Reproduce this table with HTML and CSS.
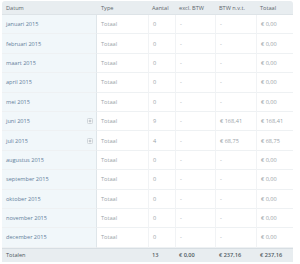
FILE: index.html
```html
<!DOCTYPE html>
<html>
<head>
<meta charset="utf-8">
<link rel="stylesheet" href="styles.css">
</head>
<body>
<div class="wrap">
<table class="tbl">
<thead>
<tr><th class="c-date">Datum</th><th class="c-type">Type</th><th class="c-n">Aantal</th><th class="c-ex">excl. BTW</th><th class="c-btw">BTW n.v.t.</th><th class="c-tot">Totaal</th></tr>
</thead>
<tbody>
<tr><td class="date">januari 2015</td><td>Totaal</td><td>0</td><td>-</td><td>-</td><td>€ 0,00</td></tr>
<tr><td class="date">februari 2015</td><td>Totaal</td><td>0</td><td>-</td><td>-</td><td>€ 0,00</td></tr>
<tr><td class="date">maart 2015</td><td>Totaal</td><td>0</td><td>-</td><td>-</td><td>€ 0,00</td></tr>
<tr><td class="date">april 2015</td><td>Totaal</td><td>0</td><td>-</td><td>-</td><td>€ 0,00</td></tr>
<tr><td class="date">mei 2015</td><td>Totaal</td><td>0</td><td>-</td><td>-</td><td>€ 0,00</td></tr>
<tr><td class="date"><span class="dl">juni 2015<svg class="plus" viewBox="0 0 6 6" width="6" height="6"><rect x="0.5" y="0.5" width="5" height="5" rx="0.8" fill="#f6f8f9" stroke="#cfd6db"/><path d="M3 1.7v2.6M1.7 3h2.6" stroke="#a9b3ba" stroke-width="0.8"/></svg></span></td><td>Totaal</td><td>9</td><td>-</td><td>€ 168,41</td><td>€ 168,41</td></tr>
<tr><td class="date"><span class="dl">juli 2015<svg class="plus" viewBox="0 0 6 6" width="6" height="6"><rect x="0.5" y="0.5" width="5" height="5" rx="0.8" fill="#f6f8f9" stroke="#cfd6db"/><path d="M3 1.7v2.6M1.7 3h2.6" stroke="#a9b3ba" stroke-width="0.8"/></svg></span></td><td>Totaal</td><td>4</td><td>-</td><td>€ 68,75</td><td>€ 68,75</td></tr>
<tr><td class="date">augustus 2015</td><td>Totaal</td><td>0</td><td>-</td><td>-</td><td>€ 0,00</td></tr>
<tr><td class="date">september 2015</td><td>Totaal</td><td>0</td><td>-</td><td>-</td><td>€ 0,00</td></tr>
<tr><td class="date">oktober 2015</td><td>Totaal</td><td>0</td><td>-</td><td>-</td><td>€ 0,00</td></tr>
<tr><td class="date">november 2015</td><td>Totaal</td><td>0</td><td>-</td><td>-</td><td>€ 0,00</td></tr>
<tr><td class="date">december 2015</td><td>Totaal</td><td>0</td><td>-</td><td>-</td><td>€ 0,00</td></tr>
</tbody>
<tfoot>
<tr><td>Totalen</td><td></td><td>13</td><td>€ 0,00</td><td>€ 237,16</td><td>€ 237,16</td></tr>
</tfoot>
</table>
</div>
</body>
</html>
```
FILE: styles.css
```css
html, body { margin: 0; padding: 0; background: #fff; }
.wrap { padding: 1px 7px 0 2px; }
.tbl {
  width: 291px;
  border-collapse: separate;
  border-spacing: 0;
  table-layout: fixed;
  font-family: "Open Sans", "Liberation Sans", sans-serif;
  font-size: 5.6px;
  color: #9aa3a8;
}
.tbl th, .tbl td {
  text-align: left;
  padding: 0 0 0 4px;
  white-space: nowrap;
  overflow: hidden;
}
.tbl th {
  background: #e8edf0;
  color: #5d666c;
  font-weight: 400;
  height: 13px;
  border-bottom: 1px solid #dde3e7;
}
.tbl th:first-child { border-top-left-radius: 3px; }
.tbl th:last-child { border-top-right-radius: 3px; }
.c-date { width: 91px; }
.c-type { width: 47px; }
.c-n { width: 23px; }
.c-ex { width: 36px; }
.c-btw { width: 37px; }
.tbl tbody td {
  height: 18.4px;
  border-bottom: 1px solid #eef1f3;
  border-left: 1px solid #f1f3f5;
}
.tbl tbody td:first-child { border-left: none; }
.tbl tbody td.date {
  background: #f1f7fa;
  color: #63809a;
  border-right: 1px solid #dfe6ea;
}
.tbl tbody td.date + td { border-left: none; }
.dl { display: flex; justify-content: space-between; align-items: center; padding-right: 3px; }
.plus { display: block; flex: none; }
.tbl tfoot td {
  background: #e8edf0;
  color: #4d565c;
  height: 13px;
  border-top: 1px solid #d7dee3;
}
.tbl tfoot td:nth-child(n+3) { color: #4f5960; font-weight: 600; }
```
